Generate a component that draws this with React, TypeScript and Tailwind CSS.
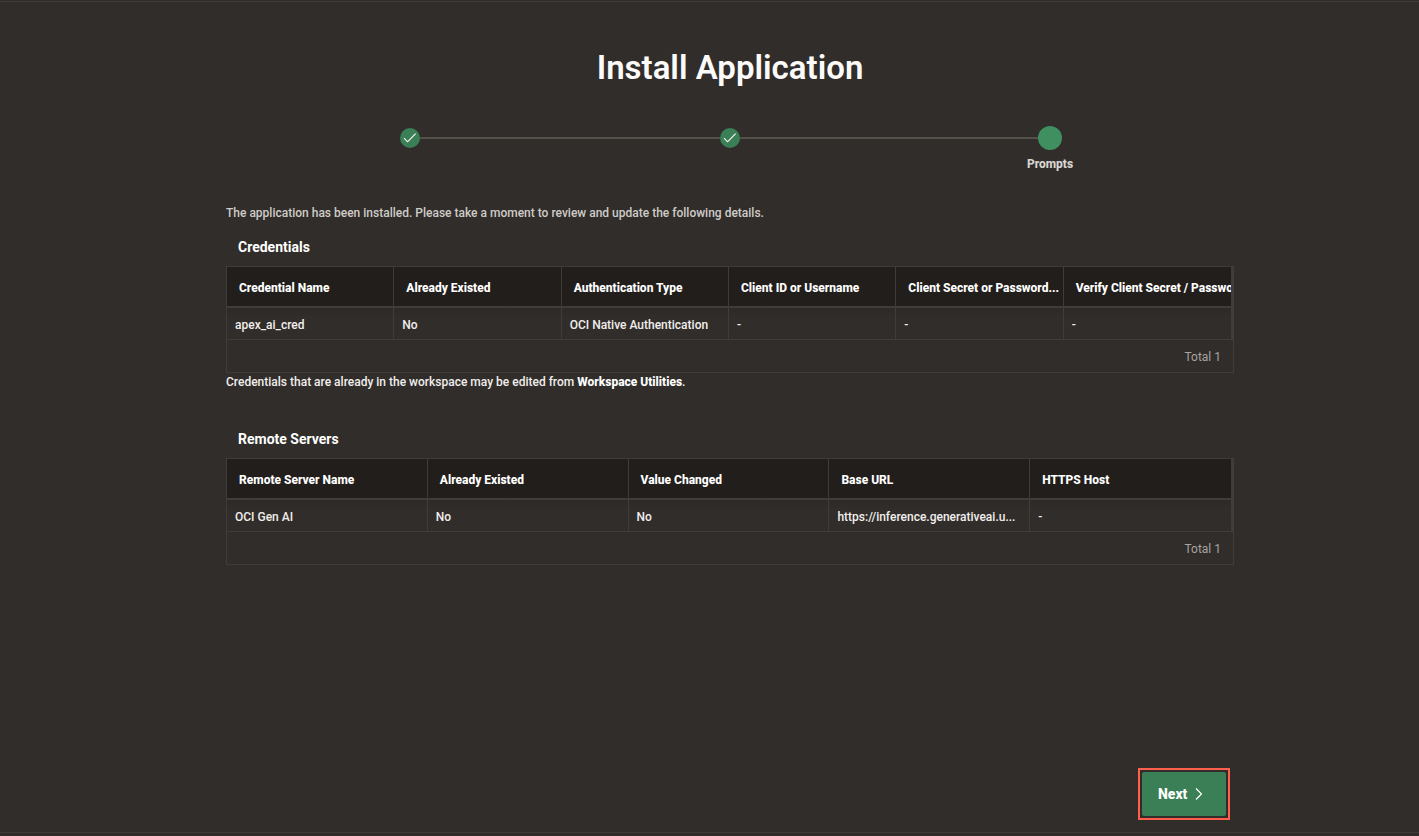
type GridProps = {
  title: string;
  columns: string[];
  rows: string[][];
};

const steps = [
  { name: "Install", done: true },
  { name: "Supporting Objects", done: true },
  { name: "Prompts", done: false },
];

const credentials: GridProps = {
  title: "Credentials",
  columns: [
    "Credential Name",
    "Already Existed",
    "Authentication Type",
    "Client ID or Username",
    "Client Secret or Password...",
    "Verify Client Secret / Password",
  ],
  rows: [["apex_ai_cred", "No", "OCI Native Authentication", "-", "-", "-"]],
};

const remoteServers: GridProps = {
  title: "Remote Servers",
  columns: ["Remote Server Name", "Already Existed", "Value Changed", "Base URL", "HTTPS Host"],
  rows: [["OCI Gen AI", "No", "No", "https://inference.generativeai.u...", "-"]],
};

function Stepper() {
  return (
    <ol className="mx-auto grid w-full max-w-[960px] grid-cols-3">
      {steps.map((step, i) => (
        <li key={step.name} className="flex flex-col items-center">
          <div className="flex h-6 w-full items-center">
            <span className={i === 0 ? "flex-1" : "h-0.5 flex-1 bg-[#55514a]"} />
            {step.done ? (
              <span role="img" aria-label={step.name} className="size-5 rounded-full bg-[#3a7f55]">
                <svg viewBox="0 0 20 20" className="size-5" fill="none" stroke="#fff" strokeWidth="1.1">
                  <path d="M4 10.2 7.6 13.8 15.6 5.6" />
                </svg>
              </span>
            ) : (
              <span className="size-6 rounded-full bg-[#3f8f60]" />
            )}
            <span className={i === steps.length - 1 ? "flex-1" : "h-0.5 flex-1 bg-[#55514a]"} />
          </div>
          {!step.done && (
            <span className="mt-1.5 text-[12px] leading-4 font-extrabold text-[#d8d5d1]">{step.name}</span>
          )}
        </li>
      ))}
    </ol>
  );
}

function ReportGrid({ title, columns, rows }: GridProps) {
  return (
    <section>
      <h2 className="px-3 text-[14px] leading-6 font-bold text-white">{title}</h2>
      <div className="mt-[7px] border border-[#403c38]">
        <table aria-label={title} className="w-full table-fixed border-separate border-spacing-0 border-r-2 border-[#403c38]">
          <thead>
            <tr>
              {columns.map((col) => (
                <th
                  key={col}
                  scope="col"
                  className="h-[41px] overflow-hidden border-r border-b-2 border-[#403c38] bg-[#221e1b] pt-0.5 pl-3 text-left text-[12px] leading-4 font-extrabold whitespace-nowrap text-white last:border-r-0"
                >
                  {col}
                </th>
              ))}
            </tr>
          </thead>
          <tbody>
            {rows.map((row) => (
              <tr key={row[0]}>
                {row.map((cell, i) => (
                  <td
                    key={i}
                    className="h-8 truncate border-r border-b border-[#403c38] bg-linear-to-b from-[#2c2926] to-[#312d2a] to-30% px-2 pt-0.5 text-[12px] leading-4 last:border-r-0"
                  >
                    {cell}
                  </td>
                ))}
              </tr>
            ))}
          </tbody>
        </table>
        <div className="flex h-8 items-center justify-end px-3 pt-0.5 text-[12px] leading-4 font-normal text-[#a8a4a0]">
          Total {rows.length}
        </div>
      </div>
    </section>
  );
}

export default function App() {
  return (
    <div className="flex min-h-screen flex-col bg-[#312d2a] pt-px pb-[3px] font-[Roboto,sans-serif] font-medium text-[#f1efed]">
      <main className="flex flex-1 flex-col border-y border-[#403c38] pl-[41px]">
        <div className="mx-auto flex w-full max-w-[1008px] flex-1 flex-col">
          <h1 className="mt-11 text-center text-[33px] leading-[44px] font-semibold text-[#fcfbfa]">Install Application</h1>
          <div className="mt-9">
            <Stepper />
          </div>

          <p className="mt-[33px] text-[12px] leading-4 text-[#cfccc8]">
            The application has been installed. Please take a moment to review and update the following details.
          </p>

          <div className="mt-3.5">
            <ReportGrid {...credentials} />
          </div>
          <p className="mt-px text-[12px] leading-4">
            Credentials that are already in the workspace may be edited from{" "}
            <a href="#workspace-utilities" className="font-extrabold text-white">
              Workspace Utilities
            </a>
            .
          </p>

          <div className="mt-[37px]">
            <ReportGrid {...remoteServers} />
          </div>

          <div className="mt-auto flex justify-end pt-10 pr-1 pb-3">
            <div className="border-2 border-[#ff5f4c] p-0.5">
              <button
                type="button"
                className="flex h-11 w-[84px] items-center gap-2 rounded-[2px] bg-[#3a7f55] px-4 text-[14px] leading-5 font-extrabold text-white"
              >
                Next
                <svg viewBox="0 0 8 14" className="h-3.5 w-2" fill="none" stroke="currentColor" strokeWidth="1.2">
                  <path d="M1 1.5 6.5 7 1 12.5" />
                </svg>
              </button>
            </div>
          </div>
        </div>
      </main>
    </div>
  );
}
